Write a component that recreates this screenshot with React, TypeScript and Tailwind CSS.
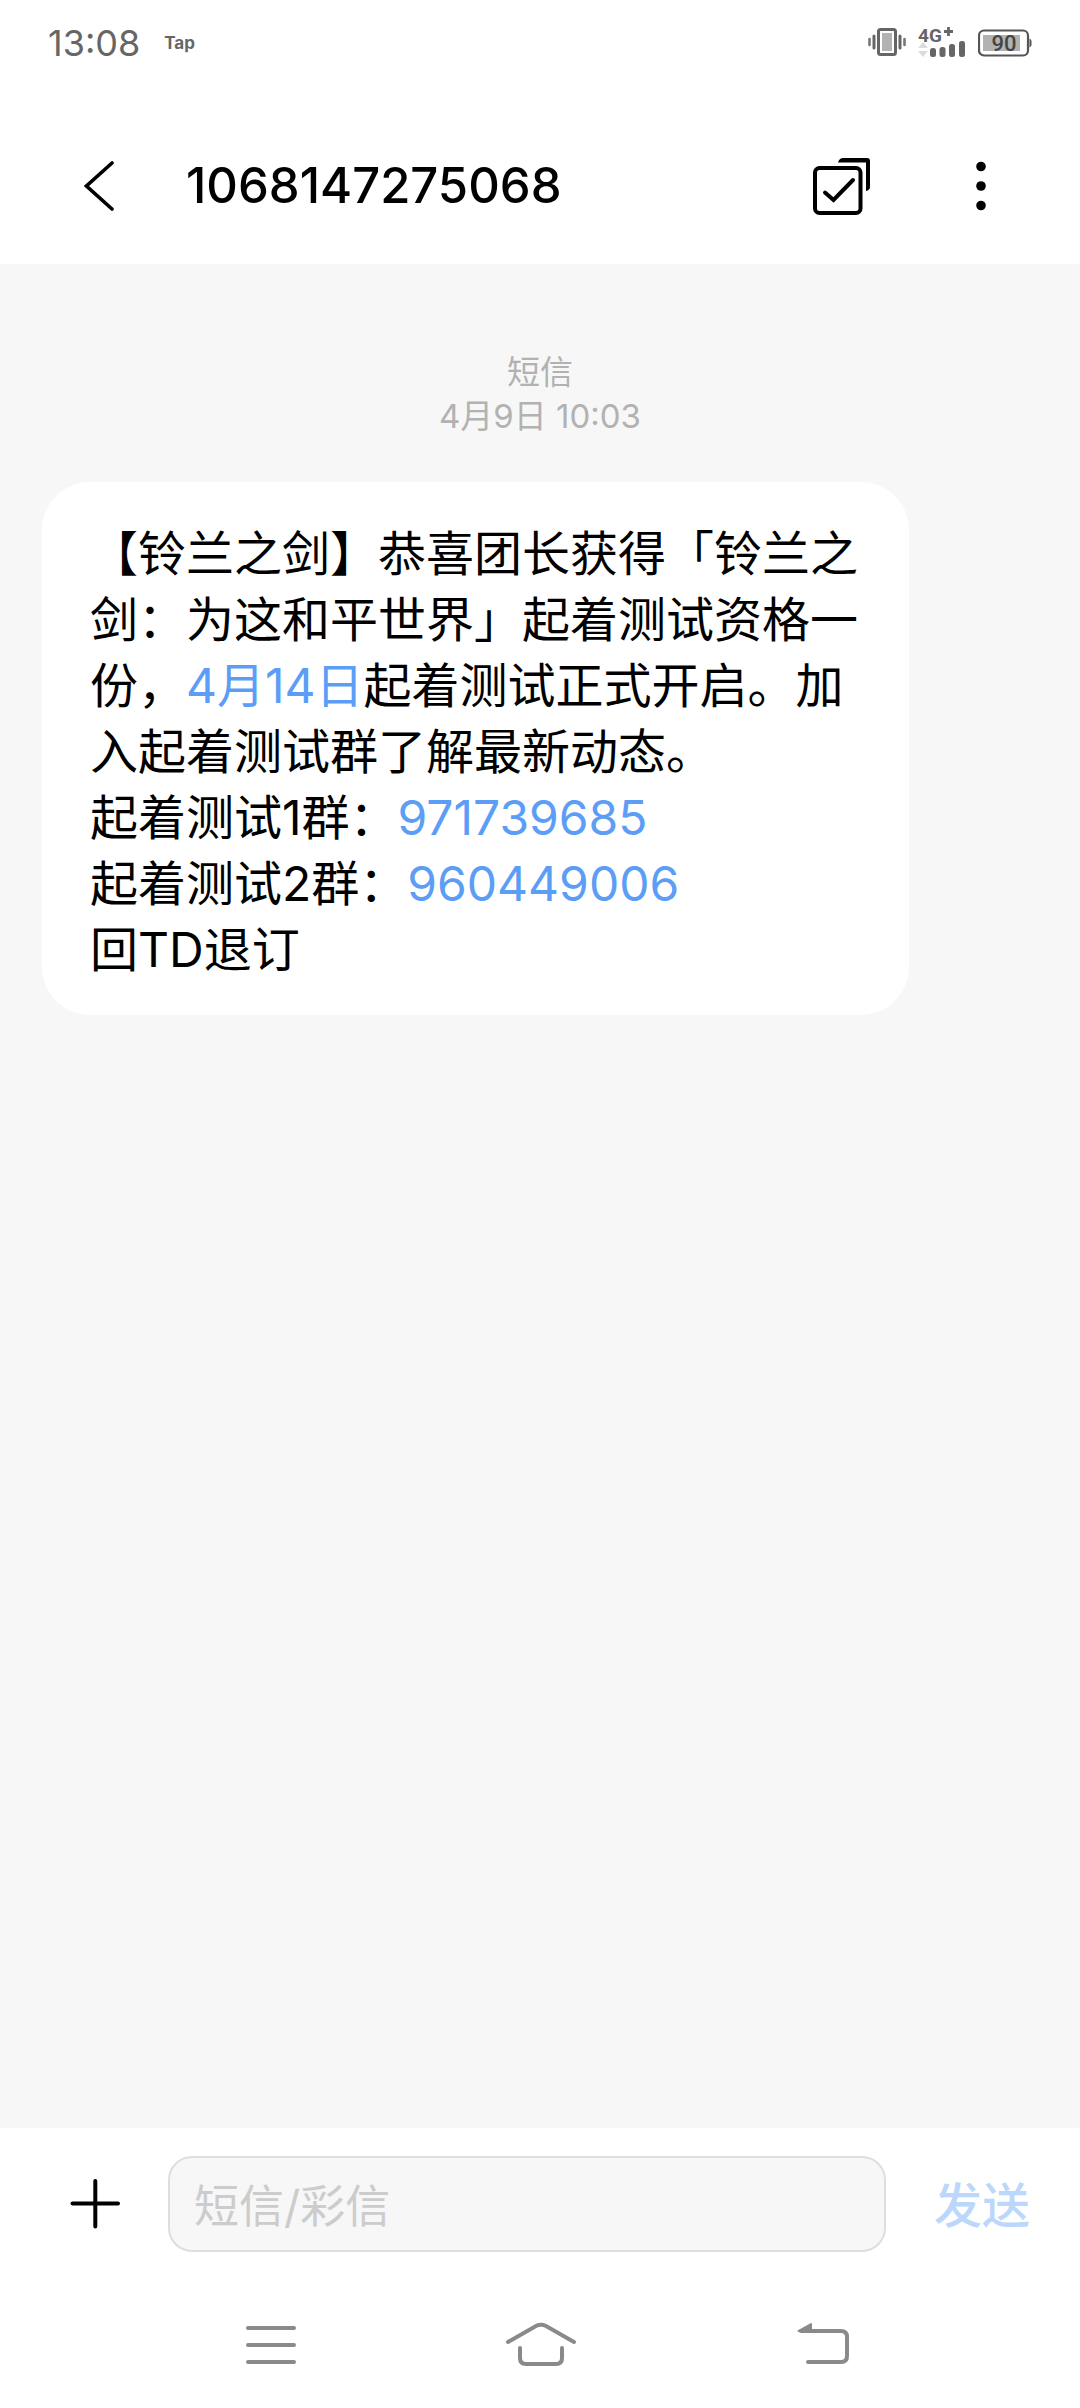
import { useState } from 'react';

type Part = {
  text: string;
  href?: string;
};

const SENDER = '1068147275068';

const messageLines: Part[][] = [
  [
    { text: '【铃兰之剑】恭喜团长获得「铃兰之剑：为这和平世界」起着测试资格一份，' },
    { text: '4月14日', href: '#date' },
    { text: '起着测试正式开启。加入起着测试群了解最新动态。' },
  ],
  [{ text: '起着测试1群：' }, { text: '971739685', href: 'tel:971739685' }],
  [{ text: '起着测试2群：' }, { text: '960449006', href: 'tel:960449006' }],
  [{ text: '回TD退订' }],
];

function StatusBar() {
  return (
    <div className="flex h-[84px] items-center justify-between pt-0.5 pl-12 pr-12 text-[#666666]">
      <div className="flex items-center gap-6">
        <span className="text-[36px] leading-[48px]">13:08</span>
        <span className="text-[17px] leading-[24px] font-bold">Tap</span>
      </div>
      <div className="flex items-center gap-3">
        {/* Vibrate */}
        <svg width="38" height="30" viewBox="0 0 38 30" fill="none" aria-hidden="true">
          <rect x="10.5" y="1.5" width="17" height="25" rx="2" stroke="#666" strokeWidth="3" />
          <rect x="14" y="5" width="10" height="18" fill="#b2b2b2" />
          <path d="M6 8v12M32 8v12" stroke="#666" strokeWidth="3" strokeLinecap="round" />
          <path d="M1.5 11v6M36.5 11v6" stroke="#777" strokeWidth="2.6" strokeLinecap="round" />
        </svg>
        {/* Mobile signal */}
        <svg width="48" height="32" viewBox="0 0 48 32" className="overflow-visible font-['Roboto',sans-serif]" aria-hidden="true">
          <text x="0" y="15" fontSize="19" fontWeight="700" fill="#666">4G</text>
          <path d="M30.500 0v9M26 4.500h9" stroke="#666" strokeWidth="2.800" />
          <path d="M5 15l5 6H0zM5 30l5-6H0z" fill="#dcdcdc" />
          <rect x="12" y="21" width="6" height="9" rx="2.5" fill="#666" />
          <rect x="21.5" y="20" width="6" height="10" rx="2.5" fill="#666" />
          <rect x="31" y="17" width="6" height="13" rx="2.5" fill="#666" />
          <rect x="41" y="14" width="6" height="16" rx="2.5" fill="#666" />
        </svg>
        {/* Battery */}
        <svg width="54" height="28" viewBox="0 0 54 28" className="font-['Roboto',sans-serif]" aria-hidden="true">
          <rect x="1" y="1.5" width="49" height="25" rx="5" fill="none" stroke="#555" strokeWidth="2.2" />
          <rect x="5" y="6" width="37" height="16" fill="#b2b2b2" />
          <path d="M51.5 9.5a3 3 0 0 1 2 2.500v4a3 3 0 0 1-2 2.500z" fill="#555" />
          <text x="26" y="22" fontSize="22" fontWeight="500" textAnchor="middle" fill="#444">90</text>
        </svg>
      </div>
    </div>
  );
}

function Header() {
  return (
    <header className="flex h-[180px] items-center pt-6 pl-[84px] pr-[75px] text-black">
      <button type="button" aria-label="返回">
        <svg width="32" height="52" viewBox="0 0 32 52" fill="none">
          <path d="M28 3L2.500 26L28 49" stroke="currentColor" strokeWidth="3.600" strokeLinecap="round" />
        </svg>
      </button>
      <h1 className="ml-[70px] flex-1 text-[49px] leading-[60px] font-medium">{SENDER}</h1>
      <div className="flex items-center gap-[86px]">
        <button type="button" aria-label="选择">
          <svg width="58" height="58" viewBox="0 0 58 58" fill="none">
            <rect x="2" y="11" width="45.500" height="45" rx="4.500" stroke="currentColor" strokeWidth="4" />
            <path d="M12 35.500L20.500 43L40 23" stroke="currentColor" strokeWidth="4" strokeLinecap="round" />
            <path d="M25 5.500C26 2 28 1 30 1H54Q57 1 57 4V30Q57 33 53 34V5.500Z" fill="currentColor" />
          </svg>
        </button>
        <button type="button" aria-label="更多" className="px-[4px]">
          <svg width="40" height="58" viewBox="0 0 40 58" fill="currentColor">
            <circle cx="20" cy="9.500" r="4.800" />
            <circle cx="20" cy="29" r="4.800" />
            <circle cx="20" cy="48.500" r="4.800" />
          </svg>
        </button>
      </div>
    </header>
  );
}

function Conversation() {
  return (
    <main className="flex-1 bg-[#f7f7f7] px-[42px] pt-[86px]">
      <div className="text-center text-[33px] leading-[44px] text-[#b2b2b2]">
        <p>短信</p>
        <p>4月9日 10:03</p>
      </div>
      <div className="mt-11 max-w-[867px] rounded-[48px] bg-white pt-[39px] pb-[32px] pl-12 pr-12 text-[48px] leading-[66px] text-black">
        {messageLines.map((line, i) => (
          <p key={i}>
            {line.map((part) =>
              part.href ? (
                <a key={part.text} href={part.href} className="text-[#5c9df5]">
                  {part.text}
                </a>
              ) : (
                <span key={part.text}>{part.text}</span>
              )
            )}
          </p>
        ))}
      </div>
    </main>
  );
}

function Composer() {
  const [draft, setDraft] = useState('');

  return (
    <form
      className="flex items-center pt-[28px] pl-[70px] pr-[50px]"
      onSubmit={(e) => {
        e.preventDefault();
        setDraft('');
      }}
    >
      <button type="button" aria-label="添加" className="shrink-0 text-black">
        <svg width="50" height="50" viewBox="0 0 50 50" fill="none">
          <path d="M2.500 24.500H48M25.300 2V47.500" stroke="currentColor" strokeWidth="4" strokeLinecap="round" />
        </svg>
      </button>
      <input
        type="text"
        aria-label="短信/彩信"
        placeholder="短信/彩信"
        value={draft}
        onChange={(e) => setDraft(e.target.value)}
        className="ml-12 h-24 min-w-0 flex-1 rounded-3xl border-2 border-[#dedede] bg-[#f7f7f7] px-6 pt-1 text-[45px] text-black outline-none placeholder:text-[#cccccc]"
      />
      <button type="submit" className="ml-12 shrink-0 pt-1 text-[48px] leading-[66px] font-medium text-[#bbd7fb]">
        发送
      </button>
    </form>
  );
}

function NavBar() {
  return (
    <nav className="flex h-[156px] items-center justify-center gap-[190px] pt-[30px] text-[#8a8a8a]">
      <button type="button" aria-label="最近任务">
        <svg width="80" height="48" viewBox="0 0 80 48" fill="none" stroke="currentColor" strokeWidth="4" strokeLinecap="round">
          <path d="M18 7H64M18 24H64M18 41H64" />
        </svg>
      </button>
      <button type="button" aria-label="主屏幕">
        <svg width="80" height="48" viewBox="0 0 80 48" fill="none" stroke="currentColor" strokeWidth="4" strokeLinecap="round">
          <path d="M8 21L36 5Q41 2.500 46 5L74 21" />
          <path d="M20 27V37Q20 43 26 43H56Q62 43 62 37V27" />
        </svg>
      </button>
      <button type="button" aria-label="返回上一级">
        <svg width="80" height="48" viewBox="0 0 80 48" fill="none" stroke="currentColor" strokeWidth="4" strokeLinecap="round">
          <path d="M31 10H71Q77 10 77 16V35Q77 41 71 41H38" />
          <path d="M28.500 10L41 3V10Z" fill="currentColor" strokeWidth="2" strokeLinejoin="round" />
        </svg>
      </button>
    </nav>
  );
}

export default function App() {
  return (
    <div lang="zh-CN" className="flex min-h-screen flex-col bg-white font-['Inter','Noto_Sans_CJK_SC',sans-serif]">
      <StatusBar />
      <Header />
      <Conversation />
      <Composer />
      <NavBar />
    </div>
  );
}
